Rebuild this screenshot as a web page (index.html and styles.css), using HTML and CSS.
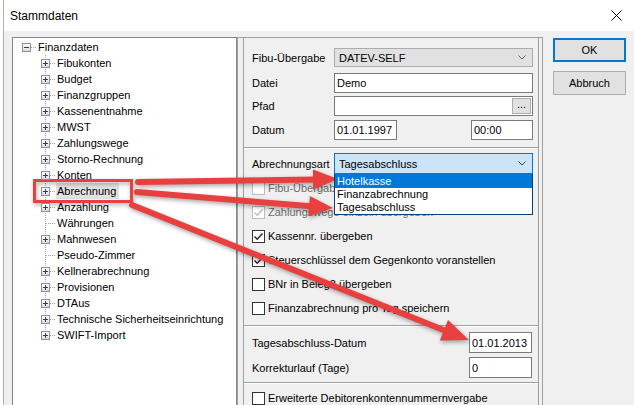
FILE: index.html
```html
<!DOCTYPE html>
<html>
<head>
<meta charset="utf-8">
<title>Stammdaten</title>
<link rel="stylesheet" href="styles.css">
</head>
<body>
<div class="screen">
  <div class="window">
    <div class="titlebar">
      <span class="title">Stammdaten</span>
      <svg class="close" width="11" height="11" viewBox="0 0 11 11"><path d="M0.5 0.5 L10.5 10.5 M10.5 0.5 L0.5 10.5" stroke="#000" stroke-width="1" fill="none"/></svg>
    </div>
    <div class="client">
      <div class="tree">
        <div class="node root"><span class="conn"><span class="exp minus"></span></span><span class="label">Finanzdaten</span></div>
        <div class="children">
          <div class="node"><span class="conn"><span class="exp plus"></span></span><span class="label">Fibukonten</span></div>
          <div class="node"><span class="conn"><span class="exp plus"></span></span><span class="label">Budget</span></div>
          <div class="node"><span class="conn"><span class="exp plus"></span></span><span class="label">Finanzgruppen</span></div>
          <div class="node"><span class="conn"><span class="exp plus"></span></span><span class="label">Kassenentnahme</span></div>
          <div class="node"><span class="conn"><span class="exp plus"></span></span><span class="label">MWST</span></div>
          <div class="node"><span class="conn"><span class="exp plus"></span></span><span class="label">Zahlungswege</span></div>
          <div class="node"><span class="conn"><span class="exp plus"></span></span><span class="label">Storno-Rechnung</span></div>
          <div class="node"><span class="conn"><span class="exp plus"></span></span><span class="label">Konten</span></div>
          <div class="node"><span class="conn"><span class="exp plus"></span></span><span class="label selected">Abrechnung</span></div>
          <div class="node"><span class="conn"><span class="exp plus"></span></span><span class="label">Anzahlung</span></div>
          <div class="node"><span class="conn leaf"></span><span class="label">Währungen</span></div>
          <div class="node"><span class="conn"><span class="exp plus"></span></span><span class="label">Mahnwesen</span></div>
          <div class="node"><span class="conn leaf"></span><span class="label">Pseudo-Zimmer</span></div>
          <div class="node"><span class="conn"><span class="exp plus"></span></span><span class="label">Kellnerabrechnung</span></div>
          <div class="node"><span class="conn"><span class="exp plus"></span></span><span class="label">Provisionen</span></div>
          <div class="node"><span class="conn"><span class="exp plus"></span></span><span class="label">DTAus</span></div>
          <div class="node"><span class="conn"><span class="exp plus"></span></span><span class="label">Technische Sicherheitseinrichtung</span></div>
          <div class="node last"><span class="conn"><span class="exp plus"></span></span><span class="label">SWIFT-Import</span></div>
        </div>
      </div>

      <div class="panel">
        <div class="group">
          <div class="row r-fibu">
            <span class="lbl">Fibu-Übergabe</span>
            <div class="combo">
              <span>DATEV-SELF</span>
              <svg class="chev" width="8" height="5" viewBox="0 0 8 5"><path d="M0.5 0.5 L4 4 L7.5 0.5" stroke="#606060" fill="none"/></svg>
            </div>
          </div>
          <div class="row r-datei">
            <span class="lbl">Datei</span>
            <div class="input wide">Demo</div>
          </div>
          <div class="row r-pfad">
            <span class="lbl">Pfad</span>
            <div class="input wide with-btn"><span class="dots">...</span></div>
          </div>
          <div class="row r-datum">
            <span class="lbl">Datum</span>
            <div class="input date">01.01.1997</div>
            <div class="input time">00:00</div>
          </div>

          <div class="sep s1"></div>

          <div class="row r-art">
            <span class="lbl">Abrechnungsart</span>
            <div class="drop-wrap">
              <div class="combo active">
                <span>Tagesabschluss</span>
                <svg class="chev" width="8" height="5" viewBox="0 0 8 5"><path d="M0.5 0.5 L4 4 L7.5 0.5" stroke="#404040" fill="none"/></svg>
              </div>
              <div class="list">
                <div class="item sel">Hotelkasse</div>
                <div class="item">Finanzabrechnung</div>
                <div class="item">Tagesabschluss</div>
              </div>
            </div>
          </div>

          <div class="checks">
            <div class="chk disabled"><span class="box"></span><span>Fibu-Übergabe einzeln</span></div>
            <div class="chk disabled"><span class="box"><svg width="11" height="11" viewBox="0 0 11 11"><path d="M1.5 5.5 L4.2 8.2 L9.5 2.5" stroke="#bcbcbc" stroke-width="1.4" fill="none"/></svg></span><span>Zahlungswege einzeln übergeben</span></div>
            <div class="chk"><span class="box"><svg width="11" height="11" viewBox="0 0 11 11"><path d="M1.5 5.5 L4.2 8.2 L9.5 2.5" stroke="#222" stroke-width="1.4" fill="none"/></svg></span><span>Kassennr. übergeben</span></div>
            <div class="chk"><span class="box"><svg width="11" height="11" viewBox="0 0 11 11"><path d="M1.5 5.5 L4.2 8.2 L9.5 2.5" stroke="#222" stroke-width="1.4" fill="none"/></svg></span><span>Steuerschlüssel dem Gegenkonto voranstellen</span></div>
            <div class="chk"><span class="box"></span><span>BNr in Beleg2 übergeben</span></div>
            <div class="chk"><span class="box"></span><span>Finanzabrechnung pro Tag speichern</span></div>
          </div>

          <div class="sep s2"></div>

          <div class="row r-tag">
            <span class="lbl grow">Tagesabschluss-Datum</span>
            <div class="input small">01.01.2013</div>
          </div>
          <div class="row r-korr">
            <span class="lbl grow">Korrekturlauf (Tage)</span>
            <div class="input small">0</div>
          </div>

          <div class="sep s3"></div>

          <div class="chk last-chk"><span class="box"></span><span>Erweiterte Debitorenkontennummernvergabe</span></div>
        </div>
      </div>

      <div class="buttons">
        <div class="btn default">OK</div>
        <div class="btn">Abbruch</div>
      </div>
    </div>
  </div>

  <svg class="overlay" width="634" height="405" viewBox="0 0 634 405">
    <g class="marks" fill="#e8403e" stroke="#e8403e">
      <rect x="34.5" y="180.5" width="97" height="21" fill="none" stroke-width="3"/>
      <line x1="138" y1="182" x2="315" y2="179.5" stroke-width="6" stroke-linecap="round"/>
      <polygon points="338,179 313,169.5 313,189.5" stroke="none"/>
      <line x1="137" y1="192" x2="311" y2="206.2" stroke-width="6" stroke-linecap="round"/>
      <polygon points="333,208 309.9,196.1 308.3,216" stroke="none"/>
      <line x1="132" y1="205" x2="446" y2="331" stroke-width="6" stroke-linecap="round"/>
      <polygon points="469,340 448,320.1 439.8,340.5" stroke="none"/>
    </g>
  </svg>
</div>
</body>
</html>
```

FILE: styles.css
```css
* { box-sizing: border-box; }
html, body { margin: 0; padding: 0; }
body {
  width: 634px;
  height: 405px;
  overflow: hidden;
  background: #fff;
  font-family: "Liberation Sans", Arial, sans-serif;
  font-size: 11px;
  color: #000;
}
.screen {
  position: relative;
  width: 634px;
  height: 405px;
  padding-left: 3px;
  overflow: hidden;
}
.window {
  height: 405px;
  border-left: 1px solid #b0b0b0;
  display: flex;
  flex-direction: column;
  background: #f0f0f0;
}
.titlebar {
  height: 31px;
  flex: none;
  background: #fff;
  display: flex;
  align-items: center;
  justify-content: space-between;
  padding: 0 12px 0 6px;
}
.title { font-size: 12px; }
.client {
  flex: 1;
  display: flex;
  align-items: flex-start;
  padding: 6px 0 0 8px;
}

/* tree */
.tree {
  width: 225px;
  height: 380px;
  flex: none;
  background: #fff;
  border: 1px solid #828790;
  padding: 1px 0 0 5px;
}
.node {
  display: flex;
  align-items: center;
  height: 16px;
}
.children .node { padding-left: 19px; }
.conn {
  position: relative;
  width: 19px;
  height: 16px;
  flex: none;
}
.conn::after {
  content: "";
  position: absolute;
  left: 13px;
  top: 8px;
  width: 6px;
  height: 1px;
  background: repeating-linear-gradient(to right, #a0a0a0 0 1px, transparent 1px 2px);
}
.conn.leaf::after { left: 9px; width: 10px; }
.children .conn::before {
  content: "";
  position: absolute;
  left: 8px;
  top: 0;
  width: 1px;
  height: 16px;
  background: repeating-linear-gradient(to bottom, #a0a0a0 0 1px, transparent 1px 2px);
}
.children .last .conn::before { height: 9px; }
.exp {
  position: absolute;
  left: 4px;
  top: 4px;
  width: 9px;
  height: 9px;
  border: 1px solid #8e8f8f;
  background: linear-gradient(#ffffff, #dcdcdc);
  z-index: 1;
}
.exp::before {
  content: "";
  position: absolute;
  left: 1px;
  top: 3px;
  width: 5px;
  height: 1px;
  background: #1f3f8a;
}
.exp.plus::after {
  content: "";
  position: absolute;
  left: 3px;
  top: 1px;
  width: 1px;
  height: 5px;
  background: #1f3f8a;
}
.label {
  line-height: 16px;
  padding: 0 3px 0 1px;
  white-space: nowrap;
}
.label.selected { background: #e2e2e2; }

/* panel */
.panel {
  width: 306px;
  height: 374px;
  flex: none;
  border-left: 1px solid #a0a0a0;
  border-top: 1px solid #a0a0a0;
  border-right: 1px solid #a0a0a0;
  padding: 0 3px 0 5px;
}
.group {
  height: 100%;
  border-left: 1px solid #a0a0a0;
  border-right: 1px solid #a0a0a0;
  padding: 0 5px 0 8px;
  display: flex;
  flex-direction: column;
}
.row {
  display: flex;
  align-items: center;
  flex: none;
}
.lbl { width: 82px; flex: none; white-space: nowrap; }
.lbl.grow { flex: 1; width: auto; }
.r-fibu { margin-top: 10px; height: 19px; }
.r-datei { margin-top: 6px; height: 20px; }
.r-pfad { margin-top: 3px; height: 20px; }
.r-datum { margin-top: 4px; height: 20px; justify-content: space-between; }
.sep {
  flex: none;
  height: 2px;
  margin-left: -8px;
  margin-right: -5px;
  border-top: 1px solid #a0a0a0;
  border-bottom: 1px solid #fff;
}
.s1 { margin-top: 7px; }
.r-art { margin-top: 4px; height: 21px; position: relative; z-index: 5; }
.combo {
  flex: 1;
  height: 19px;
  display: flex;
  align-items: center;
  justify-content: space-between;
  padding: 0 6px 0 4px;
  background: #e1e1e1;
  border: 1px solid #adadad;
}
.input {
  height: 20px;
  background: #fff;
  border: 1px solid #7a7a7a;
  padding: 0 2px;
  display: flex;
  align-items: center;
  white-space: nowrap;
}
.input.wide { flex: 1; }
.input.with-btn { justify-content: flex-end; padding: 1px; }
.dots {
  width: 19px;
  height: 16px;
  background: #e1e1e1;
  border: 1px solid #adadad;
  display: flex;
  align-items: center;
  justify-content: center;
  line-height: 1;
  padding-bottom: 3px;
}
.r-datum .lbl { margin-right: 0; }
.input.date { width: 63px; margin-right: auto; }
.input.time { width: 62px; }
.drop-wrap { flex: 1; position: relative; height: 21px; }
.combo.active {
  height: 21px;
  background: #cce4f7;
  border-color: #0078d7;
}
.list {
  position: absolute;
  top: 100%;
  left: 0;
  right: 0;
  background: #fff;
  border: 1px solid #0a3f7a;
  border-top: none;
}
.item { height: 13px; line-height: 13px; padding-left: 2px; white-space: nowrap; }
.item.sel { height: 14px; line-height: 14px; background: #0078d7; color: #fff; }

.checks { margin-top: 2px; display: flex; flex-direction: column; flex: none; }
.chk {
  height: 24px;
  display: flex;
  align-items: center;
  gap: 3px;
  white-space: nowrap;
  flex: none;
}
.box {
  width: 13px;
  height: 13px;
  flex: none;
  border: 1px solid #333;
  background: #fff;
  display: flex;
  align-items: center;
  justify-content: center;
}
.chk.disabled { color: #6d6d6d; }
.chk.disabled .box { border-color: #bcbcbc; }
.s2 { margin-top: 5px; }
.r-tag { margin-top: 5px; height: 21px; }
.r-korr { margin-top: 4px; height: 21px; }
.input.small { width: 63px; height: 21px; margin-right: 1px; }
.s3 { margin-top: 4px; }
.last-chk { margin-top: 2px; }

/* buttons */
.buttons {
  margin-left: 10px;
  margin-top: 1px;
  display: flex;
  flex-direction: column;
  gap: 9px;
  flex: none;
}
.btn {
  width: 73px;
  height: 24px;
  background: #e1e1e1;
  border: 1px solid #adadad;
  display: flex;
  align-items: center;
  justify-content: center;
}
.btn.default { border: 2px solid #0078d7; }

/* overlay annotations */
.overlay {
  position: absolute;
  top: 0;
  left: 0;
  pointer-events: none;
}
.marks { filter: drop-shadow(1px 2px 2px rgba(0,0,0,0.35)); }
```
